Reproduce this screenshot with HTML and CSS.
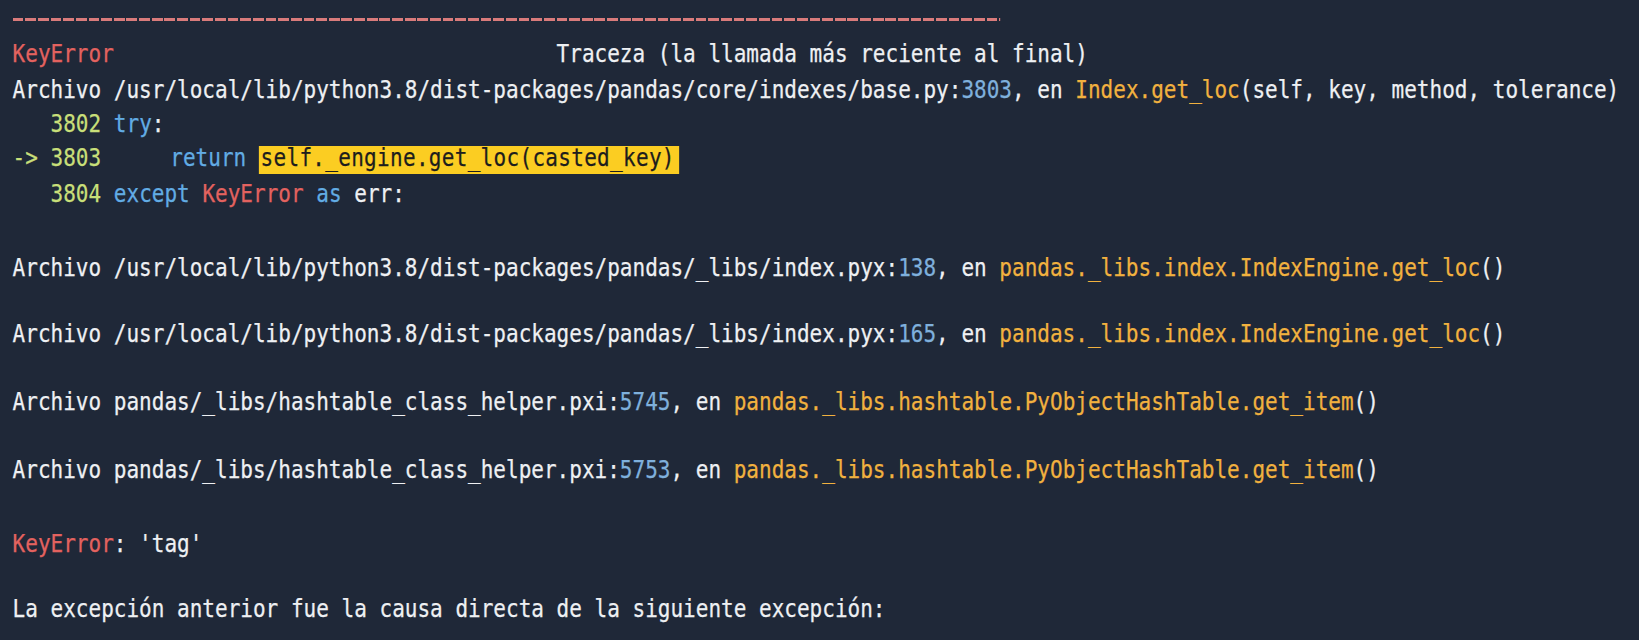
FILE: index.html
```html
<!DOCTYPE html>
<html lang="es">
<head>
<meta charset="utf-8">
<title>Traceback</title>
<link rel="stylesheet" href="styles.css">
</head>
<body>
<div class="screen">
<div class="term">
<div class="line rule"><span class="dashes"></span></div>
<div class="line h37"><span class="err">KeyError</span>                                   Traceza (la llamada más reciente al final)</div>
<div class="line">Archivo /usr/local/lib/python3.8/dist-packages/pandas/core/indexes/base.py:<span class="num">3803</span>, en <span class="fn">Index.get_loc</span>(self, key, method, tolerance)</div>
<div class="line h33">   <span class="ln">3802</span> <span class="kw">try</span>:</div>
<div class="line h36"><span class="ln">-&gt; 3803</span>     <span class="kw ret">return</span> <span class="hl">self._engine.get_loc(casted_key)</span></div>
<div class="line">   <span class="ln">3804</span> <span class="kw">except</span> <span class="err">KeyError</span> <span class="kw">as</span> err:</div>
<div class="line h39"></div>
<div class="line">Archivo /usr/local/lib/python3.8/dist-packages/pandas/_libs/index.pyx:<span class="num">138</span>, en <span class="fn">pandas._libs.index.IndexEngine.get_loc</span>()</div>
<div class="line h31"></div>
<div class="line">Archivo /usr/local/lib/python3.8/dist-packages/pandas/_libs/index.pyx:<span class="num">165</span>, en <span class="fn">pandas._libs.index.IndexEngine.get_loc</span>()</div>
<div class="line h33"></div>
<div class="line">Archivo pandas/_libs/hashtable_class_helper.pxi:<span class="num">5745</span>, en <span class="fn">pandas._libs.hashtable.PyObjectHashTable.get_item</span>()</div>
<div class="line h33"></div>
<div class="line">Archivo pandas/_libs/hashtable_class_helper.pxi:<span class="num">5753</span>, en <span class="fn">pandas._libs.hashtable.PyObjectHashTable.get_item</span>()</div>
<div class="line h39"></div>
<div class="line"><span class="err">KeyError</span>: 'tag'</div>
<div class="line h30"></div>
<div class="line">La excepción anterior fue la causa directa de la siguiente excepción:</div>
</div>
</div>
</body>
</html>
```
FILE: styles.css
```css
html, body {
  margin: 0;
  padding: 0;
  background: #1f2838;
  height: 100%;
  overflow: hidden;
}

.screen {
  width: 100%;
  height: 100%;
  overflow: hidden;
}

.term {
  width: 1940px;
  padding-left: 15px;
  box-sizing: border-box;
  font-family: "DejaVu Sans Mono", "Liberation Mono", monospace;
  font-size: 25px;
  line-height: 35px;
  color: #eef0f3;
  -webkit-text-stroke: 0.25px currentColor;
  transform: scaleX(0.8405);
  transform-origin: 0 0;
}

.line {
  height: 35px;
  white-space: pre;
}

.h30 { height: 30px; line-height: 30px; }
.h31 { height: 31px; line-height: 31px; }
.h33 { height: 33px; line-height: 33px; }
.h36 { height: 36px; line-height: 36px; }
.h37 { height: 37px; line-height: 37px; }
.h39 { height: 39px; line-height: 39px; }

.rule {
  display: flex;
  align-items: center;
  padding-top: 3px;
  box-sizing: border-box;
}

.dashes {
  display: block;
  width: 1175px;
  height: 3px;
  background: repeating-linear-gradient(to right, #d97b7b 0, #d97b7b 12.8px, transparent 12.8px, transparent 15.05px);
}

.err { color: #e3625f; }
.ln  { color: #c8df79; }
.kw  { color: #62ace4; }
.num { color: #7fb0dc; }
.fn  { color: #f1b13f; }

.ret {
  margin-left: 7px;
}

.hl {
  display: inline-block;
  line-height: 24px;
  padding: 0 5px 4px 2px;
  background: #fbcd22;
  color: #1d1d1d;
  letter-spacing: 0.35px;
}
```
